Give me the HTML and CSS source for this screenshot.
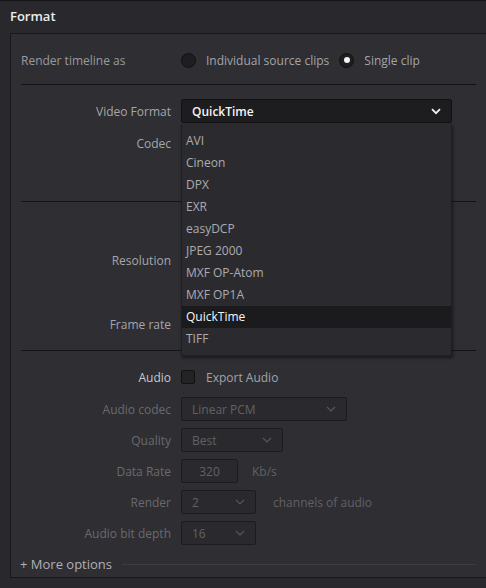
FILE: index.html
```html
<!DOCTYPE html>
<html>
<head>
<meta charset="utf-8">
<link rel="stylesheet" href="styles.css">
</head>
<body>
<div class="header">Format</div>
<div class="panel">
  <div class="row radio-row">
    <span class="plain-label">Render timeline as</span>
    <span class="radio"></span><span class="opt">Individual source clips</span>
    <span class="radio on"></span><span class="opt">Single clip</span>
  </div>
  <div class="sep sep1"></div>
  <div class="row vf-row">
    <span class="label">Video Format</span>
    <div class="select-wrap">
      <div class="select main">
        <span class="val">QuickTime</span>
        <svg class="chev" width="10" height="7" viewBox="0 0 10 7"><path d="M1 1.2 L5 5.2 L9 1.2" fill="none" stroke="#f0f0f0" stroke-width="1.8"/></svg>
      </div>
      <div class="menu">
        <div class="item">AVI</div>
        <div class="item">Cineon</div>
        <div class="item">DPX</div>
        <div class="item">EXR</div>
        <div class="item">easyDCP</div>
        <div class="item">JPEG 2000</div>
        <div class="item">MXF OP-Atom</div>
        <div class="item">MXF OP1A</div>
        <div class="item active">QuickTime</div>
        <div class="item">TIFF</div>
      </div>
    </div>
  </div>
  <div class="row codec-row"><span class="label">Codec</span></div>
  <div class="sep sep2"></div>
  <div class="row res-row"><span class="label">Resolution</span></div>
  <div class="row fr-row"><span class="label">Frame rate</span></div>
  <div class="sep sep3"></div>
  <div class="row audio-row">
    <span class="label bright">Audio</span>
    <span class="check"></span><span class="opt">Export Audio</span>
  </div>
  <div class="row dim-row first">
    <span class="label dim">Audio codec</span>
    <div class="dsel w166"><span>Linear PCM</span><svg class="dchev" width="10" height="6" viewBox="0 0 10 6"><path d="M1 1 L5 5 L9 1" fill="none" stroke="#55555a" stroke-width="1.2"/></svg></div>
  </div>
  <div class="row dim-row">
    <span class="label dim">Quality</span>
    <div class="dsel w102"><span>Best</span><svg class="dchev" width="10" height="6" viewBox="0 0 10 6"><path d="M1 1 L5 5 L9 1" fill="none" stroke="#55555a" stroke-width="1.2"/></svg></div>
  </div>
  <div class="row dim-row">
    <span class="label dim">Data Rate</span>
    <div class="dsel input w57"><span>320</span></div>
    <span class="unit">Kb/s</span>
  </div>
  <div class="row dim-row">
    <span class="label dim">Render</span>
    <div class="dsel w75"><span>2</span><svg class="dchev" width="10" height="6" viewBox="0 0 10 6"><path d="M1 1 L5 5 L9 1" fill="none" stroke="#55555a" stroke-width="1.2"/></svg></div>
    <span class="unit ch">channels of audio</span>
  </div>
  <div class="row dim-row">
    <span class="label dim">Audio bit depth</span>
    <div class="dsel w75"><span>16</span><svg class="dchev" width="10" height="6" viewBox="0 0 10 6"><path d="M1 1 L5 5 L9 1" fill="none" stroke="#55555a" stroke-width="1.2"/></svg></div>
  </div>
  <div class="more">
    <span class="more-text">+ More options</span>
    <span class="more-line"></span>
  </div>
</div>
</body>
</html>
```
FILE: styles.css
```css
html, body {
  margin: 0;
  padding: 0;
}
body {
  width: 486px;
  height: 588px;
  overflow: hidden;
  background: #28282d;
  font-family: "Open Sans", "Liberation Sans", sans-serif;
  font-size: 12px;
  color: #a0a0a4;
  border-top: 1px solid #151517;
  box-sizing: border-box;
}
.header {
  height: 32px;
  line-height: 31px;
  padding-left: 10px;
  color: #ececec;
  font-size: 13px;
  font-weight: 600;
}
.panel {
  margin-left: 10px;
  border: 1px solid #18181a;
  border-right: none;
  background: #2e2e33;
  padding: 14px 10px 3px 10px;
  position: relative;
}
.row {
  display: flex;
  align-items: center;
  height: 24px;
}
.plain-label {
  width: 160px;
  color: #9a9a9e;
}
.label {
  width: 150px;
  margin-right: 10px;
  text-align: right;
  color: #a6a6aa;
  flex: none;
}
.label.bright { color: #c8c8cc; }
.label.dim { color: #6a6a6e; }
.radio {
  width: 13px;
  height: 13px;
  border-radius: 50%;
  background: #1e1e21;
  border: 1px solid #111113;
  position: relative;
  flex: none;
  margin-right: 10px;
}
.radio.on::after {
  content: "";
  position: absolute;
  left: 3.5px;
  top: 3.5px;
  width: 6px;
  height: 6px;
  border-radius: 50%;
  background: #f2f2f2;
}
.opt {
  color: #a4a4a8;
  margin-right: 10px;
}
.sep {
  height: 1px;
  background: #131315;
}
.sep1 { margin-top: 12px; }
.vf-row { margin-top: 14px; }
.select-wrap {
  position: relative;
  width: 271px;
  height: 24px;
}
.select.main {
  box-sizing: border-box;
  height: 24px;
  background: #1d1d20;
  border: 1px solid #111113;
  border-radius: 2px;
  display: flex;
  align-items: center;
  justify-content: space-between;
  padding: 0 10px 0 10px;
  color: #f4f4f4;
  font-weight: 600;
}
.menu {
  position: absolute;
  top: 25px;
  left: 0;
  width: 271px;
  box-sizing: border-box;
  padding: 6px 0 5px 0;
  background: #2b2b2f;
  border: 1px solid #1f1f22;
  border-top: none;
  box-shadow: 1px 2px 3px rgba(0,0,0,0.45);
  z-index: 5;
}
.item {
  height: 22px;
  line-height: 22px;
  padding-left: 4px;
  color: #acacb0;
}
.item.active {
  background: #1b1b1e;
  color: #f6f6f6;
}
.codec-row { margin-top: 8px; }
.sep2 { margin-top: 46px; }
.res-row { margin-top: 46px; }
.fr-row { margin-top: 40px; }
.sep3 { margin-top: 14px; }
.audio-row { margin-top: 14px; }
.check {
  width: 12px;
  height: 12px;
  background: #232326;
  border: 1px solid #111113;
  border-radius: 2px;
  margin-right: 11px;
  flex: none;
}
.dim-row { margin-top: 7px; }
.dim-row.first { margin-top: 8px; }
.dsel {
  box-sizing: border-box;
  height: 24px;
  background: #2a2a2e;
  border: 1px solid #1c1c1f;
  border-radius: 2px;
  display: flex;
  align-items: center;
  justify-content: space-between;
  padding: 0 10px 0 10px;
  color: #616165;
  flex: none;
}
.dsel.input { justify-content: center; padding: 0; }
.w166 { width: 166px; }
.w102 { width: 102px; }
.w57 { width: 57px; }
.w75 { width: 75px; }
.unit {
  color: #616165;
  margin-left: 14px;
}
.unit.ch { margin-left: 17px; }
.more {
  display: flex;
  align-items: center;
  height: 20px;
  margin-top: 9px;
}
.more-text {
  color: #b0b0b4;
  font-size: 13px;
  margin-right: 10px;
  margin-left: -1px;
}
.more-line {
  flex: 1;
  height: 1px;
  background: #3c3c41;
}
```
